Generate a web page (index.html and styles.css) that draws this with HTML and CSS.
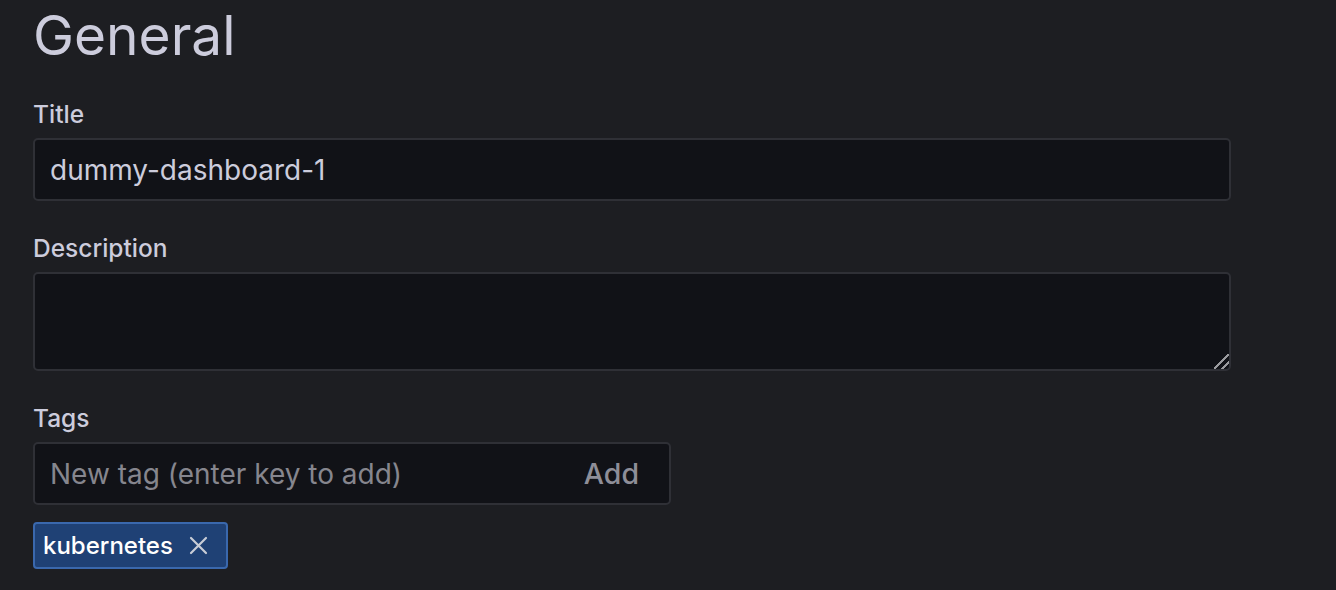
FILE: index.html
```html
<!DOCTYPE html>
<html lang="en">
<head>
<meta charset="utf-8">
<title>General</title>
<link rel="stylesheet" href="styles.css">
</head>
<body>
<main class="page">
  <h1 class="heading">General</h1>
  <div class="field">
    <label class="label" for="title">Title</label>
    <input class="input" id="title" type="text" value="dummy-dashboard-1">
  </div>
  <div class="field">
    <label class="label" for="desc">Description</label>
    <textarea class="textarea" id="desc"></textarea>
  </div>
  <div class="field">
    <label class="label" for="tag">Tags</label>
    <div class="tag-input">
      <input class="tag-field" id="tag" type="text" placeholder="New tag (enter key to add)">
      <span class="tag-add">Add</span>
    </div>
    <div class="tags">
      <span class="tag">kubernetes
        <svg class="tag-x" viewBox="0 0 19 19" width="19" height="19" aria-hidden="true"><path d="M2 2 L17 17 M17 2 L2 17" stroke="currentColor" stroke-width="2.2" stroke-linecap="round" fill="none"/></svg>
      </span>
    </div>
  </div>
</main>
</body>
</html>
```
FILE: styles.css
```css
html, body {
  margin: 0;
  padding: 0;
  background: #1d1e22;
}
body {
  font-family: Inter, "Noto Sans", sans-serif;
  color: #ccccdc;
}
.page {
  padding: 0 0 0 33px;
  width: 1198px;
}
.heading {
  margin: 0 0 30px 0;
  font-size: 55px;
  line-height: 70px;
  font-weight: 400;
  color: #ccccdc;
}
.field {
  margin-bottom: 33px;
}
.label {
  display: block;
  font-size: 24.5px;
  line-height: 29px;
  font-weight: 500;
  color: #ccccdc;
  margin-bottom: 9px;
}
.input, .textarea, .tag-input {
  display: block;
  box-sizing: border-box;
  width: 1198px;
  background: #111217;
  border: 2px solid #2f3036;
  border-radius: 5px;
  color: #ccccdc;
  font-family: Inter, "Noto Sans", sans-serif;
  font-size: 28px;
  outline: none;
}
.input {
  height: 63px;
  padding: 0 15px;
}
.textarea {
  height: 99px;
  padding: 10px 15px;
  resize: vertical;
  margin: 0;
}
.textarea::-webkit-resizer {
  width: 14px;
  height: 14px;
  background: linear-gradient(135deg,
    transparent 0, transparent 45%,
    #9a9a9e 45%, #9a9a9e 55%,
    transparent 55%, transparent 72%,
    #9a9a9e 72%, #9a9a9e 82%,
    transparent 82%);
}
.tag-input {
  width: 638px;
  height: 63px;
  display: flex;
  align-items: center;
  padding: 0 30px 0 15px;
}
.tag-field {
  flex: 1;
  min-width: 0;
  background: transparent;
  border: none;
  outline: none;
  padding: 0;
  color: #ccccdc;
  font-family: inherit;
  font-size: 28px;
}
.tag-field::placeholder {
  color: #86868e;
}
.tag-add {
  font-size: 28.5px;
  font-weight: 500;
  color: #8e8e98;
}
.tags {
  margin-top: 17px;
  display: flex;
}
.tag {
  display: inline-flex;
  align-items: center;
  box-sizing: border-box;
  height: 47px;
  padding: 0 18px 0 8px;
  background: #1f4175;
  border: 2px solid #3a68ad;
  border-radius: 4px;
  color: #ffffff;
  font-size: 24px;
  font-weight: 500;
  gap: 16px;
}
.tag-x {
  color: #c8ccd6;
}
```
